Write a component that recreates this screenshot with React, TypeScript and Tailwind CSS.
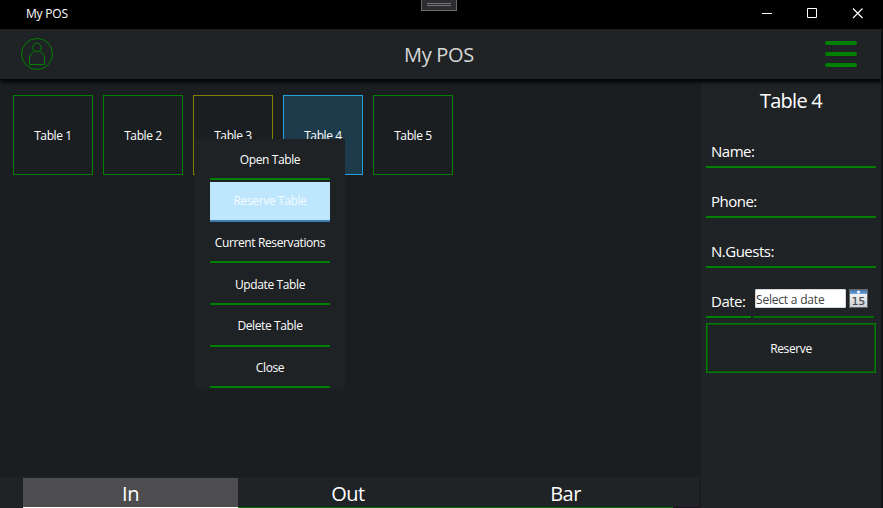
import type { ReactNode } from "react";

const tables = [
  { name: "Table 1", style: "border-[#008000]" },
  { name: "Table 2", style: "border-[#008000]" },
  { name: "Table 3", style: "border-[#808000]" },
  { name: "Table 4", style: "border-[#26a0da] bg-[#1e3b4c]" },
  { name: "Table 5", style: "border-[#008000]" },
];

const menuItems = [
  { label: "Open Table" },
  { label: "Reserve Table", active: true },
  { label: "Current Reservations" },
  { label: "Update Table" },
  { label: "Delete Table" },
  { label: "Close" },
];

function TitleBar() {
  return (
    <div className="relative flex h-[29px] shrink-0 items-start bg-black">
      <span className="ml-[26px] mt-[6px] text-[12px] leading-4 tracking-[-0.2px]">My POS</span>
      <div className="absolute left-[421px] top-0 flex h-[11px] w-9 flex-col items-center gap-px border border-t-0 border-[#6b6b6f] bg-[#2d2d30] pt-[3px]">
        <div className="h-px w-6 bg-[#77777a]" />
        <div className="h-px w-6 bg-[#77777a]" />
      </div>
      <svg className="ml-auto mr-[19px] mt-[7px]" width="102" height="12" viewBox="0 0 102 12" fill="none" stroke="#fff">
        <path d="M0 6.5H10" />
        <path d="M45.5 1.5H54.5V10.5H45.5Z" />
        <path d="M91 1.5L100.5 11M100.5 1.5L91 11" strokeWidth="1.2" />
      </svg>
    </div>
  );
}

function Header() {
  return (
    <div className="relative z-10 flex h-[50px] w-[881px] shrink-0 items-center justify-between bg-[#1f2326] pl-[21px] pr-6 shadow-[0_3px_4px_0px_#000]">
      <svg width="32" height="32" viewBox="0 0 32 32" fill="none" stroke="#008000">
        <circle cx="16" cy="16" r="15.5" />
        <circle cx="16" cy="9.5" r="4.2" />
        <path d="M13.3 13.3C11 14.7 8.5 16.5 8.5 20.5V26.5H23.5V20.5C23.5 16.5 21 14.7 18.7 13.3" />
      </svg>
      <span className="pt-0.5 text-[20px] leading-6 tracking-[-0.3px] text-[#d6d7d7]">My POS</span>
      <div className="flex w-8 flex-col gap-[7px]">
        <div className="h-1 rounded-full bg-[#008000]" />
        <div className="h-1 rounded-full bg-[#008000]" />
        <div className="h-1 rounded-full bg-[#008000]" />
      </div>
    </div>
  );
}

function ContextMenu() {
  return (
    <div className="absolute left-[195px] top-[60px] flex h-[250px] w-[150px] flex-col items-center justify-between bg-[#1f2225] pb-[0.6px] pt-[1.03px]">
      {menuItems.map((m) => (
        <div
          key={m.label}
          className={`flex h-10 w-[120px] items-center justify-center whitespace-nowrap border-b-2 pt-px text-[12px] tracking-[-0.38px] ${
            m.active ? "border-[#3c7fb1] bg-[#bee6fd] text-[#f5fbff]" : "border-[#008000]"
          }`}
        >
          {m.label}
        </div>
      ))}
    </div>
  );
}

function Field({ children }: { children: ReactNode }) {
  return (
    <div className="flex h-[50px] items-end border-b-2 border-[#008000] pb-1 pl-[5px] text-[15px] leading-[22px] tracking-[-0.5px]">
      {children}
    </div>
  );
}

function Calendar() {
  return (
    <svg width="19" height="19" viewBox="0 0 19 19">
      <defs>
        <linearGradient id="page" x2="0" y2="1">
          <stop stopColor="#fff" />
          <stop offset="1" stopColor="#c9ccd1" />
        </linearGradient>
        <linearGradient id="top" x2="0" y2="1">
          <stop stopColor="#4272a8" />
          <stop offset="1" stopColor="#6fa8dc" />
        </linearGradient>
      </defs>
      <rect x="0.5" y="0.5" width="18" height="18" fill="url(#page)" stroke="#62666a" />
      <rect x="1" y="1" width="17" height="4" fill="url(#top)" />
      <circle cx="9.5" cy="3" r="1.5" fill="#fff" />
      <text x="9.5" y="15.8" textAnchor="middle" fontSize="10.5" stroke="#42464a" strokeWidth="0.2" fill="#42464a" fontFamily="DejaVu Sans, sans-serif" letterSpacing="0">
        15
      </text>
    </svg>
  );
}

function ReservePanel() {
  return (
    <div className="ml-0.5 mt-0.5 w-[180px] bg-[#1f2326] px-[5px]">
      <div className="flex h-[37px] items-center justify-center pb-px pt-1 text-[20px] leading-6 tracking-[-0.75px]">Table 4</div>
      <Field>Name:</Field>
      <Field>Phone:</Field>
      <Field>N.Guests:</Field>
      <div className="flex gap-0.5">
        <div className="w-[45px]">
          <Field>Date:</Field>
        </div>
        <div className="flex h-[50px] w-[121px] items-start gap-[3px] border-b-2 border-[#006c02] pl-0.5 pt-[21px]">
          <div className="flex h-[19px] w-[91px] items-center whitespace-nowrap rounded-[1px] border border-[#d5d9dd] bg-white pt-0.5 text-[12px] tracking-[-0.2px] text-[#404040]">
            Select a date
          </div>
          <Calendar />
        </div>
      </div>
      <div className="mt-[5px] flex h-[50px] items-center justify-center border border-[#008000] pt-px text-[12px] tracking-[-0.38px] shadow-[inset_0_0_0_1px_#0f5213]">
        Reserve
      </div>
    </div>
  );
}

function TabBar() {
  return (
    <div className="flex h-[31px] bg-[#1f2326] pl-[23px] pt-px text-[20px] leading-6 tracking-[-0.5px]">
      <div className="flex w-[215px] justify-center border-b border-white bg-[#4d4d4f] pt-1">In</div>
      <div className="flex w-[218px] justify-center border-b border-[#107010] pl-0.5 pt-1">Out</div>
      <div className="flex w-[217px] justify-center border-b border-[#107010] pl-0.5 pt-1">Bar</div>
      <div className="flex-1 border-b border-[#1b141d]" />
    </div>
  );
}

export default function App() {
  return (
    <div className="flex h-[508px] w-[883px] flex-col overflow-hidden bg-[#111416] font-['Open_Sans','Noto_Sans',sans-serif] text-white">
      <TitleBar />
      <Header />
      <div className="relative flex min-h-0 w-[881px] flex-1 bg-[#1b1e21]">
        <div className="flex w-[699px] flex-col">
          <div className="flex flex-1 gap-2.5 pl-[13px] pt-4">
            {tables.map((t) => (
              <div
                key={t.name}
                className={`flex size-20 items-center justify-center border pt-px text-[12px] tracking-[-0.38px] ${t.style}`}
              >
                {t.name}
              </div>
            ))}
          </div>
          <TabBar />
        </div>
        <ReservePanel />
        <ContextMenu />
      </div>
    </div>
  );
}
